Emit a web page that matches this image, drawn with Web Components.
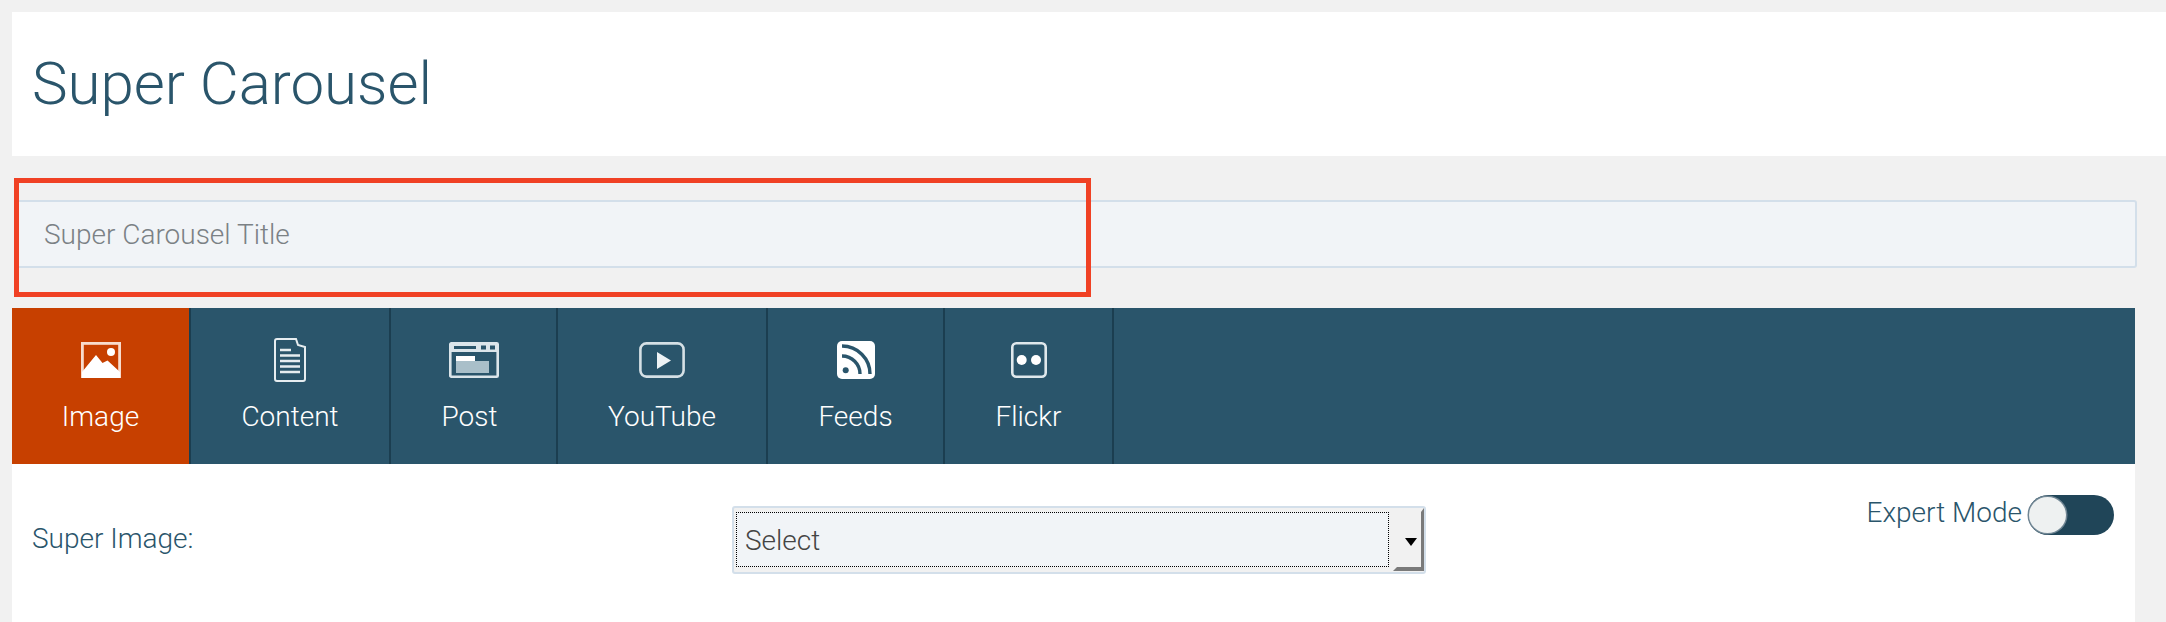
<!DOCTYPE html>
<html><head><meta charset="utf-8">
<style>
html,body{margin:0;padding:0;background:#f1f1f1;font-family:Roboto,sans-serif;width:2166px;height:622px;overflow:hidden}
sc-page{display:block}
</style></head><body>
<template id="t-page"><style>
:host{display:block;position:relative;height:622px;padding-top:12px;box-sizing:border-box}
.mark{position:absolute;left:14px;top:178px;width:1077px;height:119px;box-sizing:border-box;border:5px solid #f04124;pointer-events:none}
</style><slot></slot><div class="mark"></div></template>

<template id="t-header"><style>
:host{display:flex;align-items:center;background:#fff;height:144px;margin-left:12px;padding-left:20px;box-sizing:border-box;color:#2a556b;font:300 60px/1 Roboto,sans-serif}
</style><slot></slot></template>

<template id="t-title"><style>
:host{display:flex;align-items:center;box-sizing:border-box;height:68px;margin:44px 29px 0 16px;padding:2px 0 0 26px;background:#f1f4f7;border:2px solid #d3dfea;border-radius:3px;color:#7b8185;font:300 28px/1 Roboto,sans-serif}
</style><slot></slot></template>

<template id="t-tabs"><style>
:host{display:flex;height:156px;margin:40px 31px 0 12px;background:#2a556b}
</style><slot></slot></template>

<template id="t-tab"><style>
:host{display:flex;flex-direction:column;align-items:center;box-sizing:border-box;border-right:2px solid #1b3e50;color:#fff;font:300 28px/1 Roboto,sans-serif;padding-top:30px}
:host([active]){background:#c74000}
.i{height:44px;display:flex;align-items:center;justify-content:center}
.l{margin-top:20px;line-height:30px;padding-right:var(--label-shift,0)}
::slotted(svg){display:block}
</style><div class="i"><slot name="icon"></slot></div><div class="l"><slot></slot></div></template>

<template id="t-panel"><style>
:host{display:block;position:relative;background:#fff;margin:0 31px 0 12px;height:158px;color:#2a556b;font:300 28px/1 Roboto,sans-serif}
.row{display:flex;align-items:flex-start;padding:42px 0 0 20px}
.lab{width:700px;padding-top:18px;line-height:30px}
.exp{position:absolute;right:21px;top:31px;display:flex;align-items:flex-start;gap:6px}
.exp span{line-height:30px;padding-top:3px}
</style><div class="row"><div class="lab"><slot name="label"></slot></div><slot name="select"></slot></div><div class="exp"><span><slot name="expert"></slot></span><slot name="toggle"></slot></div></template>

<template id="t-select"><style>
:host{display:flex;box-sizing:border-box;width:694px;height:68px;background:#f1f1f1;border:2px solid #d3dfea;border-radius:3px;position:relative;color:#444;font:300 28px/1 Roboto,sans-serif}
.v{flex:none;width:653px;height:55px;margin:4px 0 0 2px;padding:2px 0 0 8px;box-sizing:border-box;border:1px dotted #000;background:#f1f4f7;display:flex;align-items:center}
.b{flex:1;position:relative;box-sizing:border-box;margin:0 0 1px 4px;border-style:solid;border-width:4px 3px 4px 4px;border-color:transparent #7a7a7a #7a7a7a transparent}
.a{position:absolute;left:50%;top:26px;margin-left:-4px;width:0;height:0;border:6px solid transparent;border-top:8px solid #000;border-bottom:0}
</style><div class="v"><slot></slot></div><div class="b"><div class="a"></div></div></template>

<template id="t-toggle"><style>
:host{display:block;position:relative;width:86px;height:40px;background:#204558;border-radius:20px}
.k{position:absolute;left:1px;top:2px;width:37px;height:36px;box-sizing:border-box;background:#eef1f1;border-radius:50%;box-shadow:0 0 0 1.5px #6f8593}
</style><div class="k"></div></template>

<sc-page>
 <sc-header>Super Carousel</sc-header>
 <sc-title-field>Super Carousel Title</sc-title-field>
 <sc-tabs>
  <sc-tab active style="width:179px"><svg slot="icon" width="40" height="36" viewBox="0 0 40 36"><rect x="1.400" y="1.400" width="37.200" height="33.200" fill="none" stroke="#f8dccd" stroke-width="2.800"/><path fill="#fff" d="M1 36V30L15 13 21.500 21 26.500 18.500 39 30V36z"/><circle cx="30" cy="10" r="4" fill="#fff"/></svg>Image</sc-tab>
  <sc-tab style="width:200px"><svg slot="icon" width="32" height="44" viewBox="0 0 32 44" fill="none" stroke="#e6edf0"><path stroke-width="2" d="M3 1h19l2 6 7 2v32a2 2 0 0 1-2 2H3a2 2 0 0 1-2-2V3a2 2 0 0 1 2-2z"/><path stroke-width="2.400" d="M6 12h11M6 17.500h20M6 23h20M6 28.500h20M6 34h20"/></svg>Content</sc-tab>
  <sc-tab style="width:167px;--label-shift:8px"><svg slot="icon" width="50" height="36" viewBox="0 0 50 36"><rect x="1.300" y="1.300" width="47.400" height="33.400" rx="1" fill="none" stroke="#dbe5ea" stroke-width="2.600"/><path fill="#dbe5ea" d="M1 1h48v9H1z"/><path fill="#2a556b" d="M5 4h22v3H5zM32 3.500h5v4h-5zM41 3.500h5v4h-5z"/><rect x="7" y="19" width="33" height="12" fill="#a9bfc9"/><rect x="7" y="14" width="19" height="5" fill="#fff"/></svg>Post</sc-tab>
  <sc-tab style="width:210px"><svg slot="icon" width="46" height="36" viewBox="0 0 46 36"><rect x="1.400" y="1.400" width="43.200" height="33.200" rx="6" fill="none" stroke="#d5e0e5" stroke-width="2.600"/><path fill="#eef3f5" d="M18 10l14 8.500-14 8.500z"/></svg>YouTube</sc-tab>
  <sc-tab style="width:177px"><svg slot="icon" width="38" height="38" viewBox="0 0 38 38"><rect width="38" height="38" rx="5" fill="#fff"/><circle cx="8.700" cy="29.300" r="3" fill="#2a556b"/><path fill="none" stroke="#2a556b" stroke-width="3.400" d="M5 15a18 18 0 0 1 18 18M5 5a28 28 0 0 1 28 28"/></svg>Feeds</sc-tab>
  <sc-tab style="width:169px"><svg slot="icon" width="36" height="36" viewBox="0 0 36 36"><rect x="1.300" y="1.300" width="33.400" height="33.400" rx="4" fill="none" stroke="#dfe8ec" stroke-width="2.600"/><circle cx="10.700" cy="18" r="5" fill="#fff"/><circle cx="25" cy="18" r="5" fill="#fff"/></svg>Flickr</sc-tab>
 </sc-tabs>
 <sc-panel>
  <span slot="label">Super Image:</span>
  <sc-select slot="select">Select</sc-select>
  <span slot="expert">Expert Mode</span>
  <sc-toggle slot="toggle"></sc-toggle>
 </sc-panel>
</sc-page>
<script>
const reg=(n,t)=>customElements.define(n,class extends HTMLElement{constructor(){super();this.attachShadow({mode:'open'}).appendChild(document.getElementById(t).content.cloneNode(true))}});
reg('sc-page','t-page');reg('sc-header','t-header');reg('sc-title-field','t-title');reg('sc-tabs','t-tabs');reg('sc-tab','t-tab');reg('sc-panel','t-panel');reg('sc-select','t-select');reg('sc-toggle','t-toggle');
</script>
</body></html>
